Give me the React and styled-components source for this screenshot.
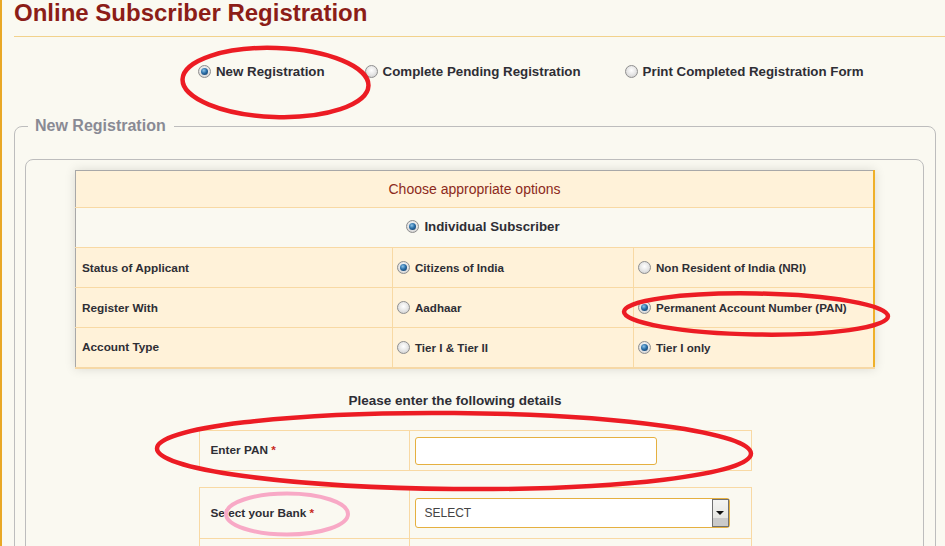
import React from 'react';
import styled, { createGlobalStyle } from 'styled-components';

const GlobalStyle = createGlobalStyle`
  html, body {
    margin: 0;
    padding: 0;
    background: #faf9f1;
  }
  body {
    font-family: "Liberation Sans", Arial, sans-serif;
    color: #2b2b2b;
  }
`;

const Page = styled.div`
  position: relative;
  min-height: 546px;
  overflow: hidden;
  border-left: 2px solid #e9a826;
  background: #faf9f1;
  padding-left: 12px;
`;

const Title = styled.h1`
  margin: 0;
  padding-top: 2px;
  height: 34px;
  line-height: 22px;
  font-size: 24px;
  font-weight: bold;
  color: #8c1d18;
  border-bottom: 1px solid #f2d28c;
`;

const TopOptions = styled.div`
  display: flex;
  align-items: center;
  height: 71px;
  padding-left: 184px;
  gap: 40px;
  margin-top: -1px;
`;

const RadioLabel = styled.label`
  display: ${(p) => (p.block ? 'flex' : 'inline-flex')};
  align-items: center;
  gap: 5px;
  margin-right: ${(p) => p.mr || 0}px;
  font-size: ${(p) => p.size || 13.3}px;
  font-weight: bold;
  color: #2e2e35;
  white-space: nowrap;
`;

const RadioDot = styled.span`
  display: inline-block;
  box-sizing: border-box;
  width: 13px;
  height: 13px;
  border-radius: 50%;
  border: 1px solid #8f8f8f;
  background: radial-gradient(circle at 50% 40%, #ffffff 0%, #e4e4e4 55%, #c4c4c4 100%);
  position: relative;
  flex: none;
  &::after {
    content: '';
    display: ${(p) => (p.checked ? 'block' : 'none')};
    position: absolute;
    left: 2px;
    top: 2px;
    width: 7px;
    height: 7px;
    border-radius: 50%;
    background: radial-gradient(circle at 40% 35%, #8fc4e8 0%, #2a6fa8 45%, #0d2c52 100%);
  }
`;

const Radio = ({ checked, children, size, block, mr }) => (
  <RadioLabel size={size} block={block} mr={mr}>
    <RadioDot checked={checked} />
    {children}
  </RadioLabel>
);

const Fieldset = styled.fieldset`
  margin: 10px 9px 0 0;
  padding: 24px 11px 20px 10px;
  border: 1px solid #bdbdbd;
  border-radius: 8px;
  min-height: 400px;
`;

const Legend = styled.legend`
  margin-left: 3px;
  padding: 0 8px 0 7px;
  font-size: 16px;
  font-weight: bold;
  color: #898a94;
`;

const InnerBox = styled.div`
  border: 1px solid #bdbdbd;
  border-radius: 8px;
  padding: 10px 48px 40px 49px;
  min-height: 380px;
`;

const OptionsTable = styled.table`
  width: 800px;
  table-layout: fixed;
  border-collapse: collapse;
  border-left: 1px solid #a8a8a8;
  border-top: 1px solid #a8a8a8;
  border-right: 2px solid #efb02a;
  border-bottom: 2px solid #f6d8a6;
  box-shadow: 0 0 10px rgba(0, 0, 0, 0.13);
  background: #fff2d9;
`;

const Row = styled.tr`
  height: 40px;
  background: ${(p) => (p.plain ? '#faf9f1' : '#fff2d9')};
`;

const HeadCell = styled.td`
  height: 36px;
  padding: 0;
  text-align: center;
  font-size: 14px;
  color: #8c2a1c;
  border-bottom: 1px solid #f8d9a4;
`;

const Cell = styled.td`
  padding: 0 4px 0 ${(p) => p.pad || 6}px;
  vertical-align: middle;
  font-size: 11.8px;
  font-weight: bold;
  color: #2e2e35;
  border-bottom: 1px solid #f8d9a4;
  border-left: ${(p) => (p.first ? 'none' : '1px solid #f8d9a4')};
`;

const CenterCell = styled.td`
  text-align: center;
  padding-left: 18px;
  border-bottom: 1px solid #f8d9a4;
`;

const Subheading = styled.div`
  margin-top: 24px;
  padding-right: 40px;
  text-align: center;
  font-size: 13.5px;
  font-weight: bold;
  color: #2e2e35;
`;

const FormTable = styled.table`
  width: 553px;
  table-layout: fixed;
  margin: ${(p) => p.top}px auto 0;
  border-collapse: collapse;
  border: 1px solid #f8d9a4;
`;

const FormRow = styled.tr`
  height: ${(p) => p.h}px;
`;

const FormLabel = styled.td`
  width: 197px;
  padding-left: 11px;
  font-size: 11.8px;
  font-weight: bold;
  color: #2e2e35;
  border-right: 1px solid #f8d9a4;
  border-bottom: 1px solid #f8d9a4;
`;

const FormField = styled.td`
  padding-left: 5px;
  border-bottom: 1px solid #f8d9a4;
`;

const Star = styled.span`
  color: #c8281c;
`;

const TextInput = styled.input`
  box-sizing: border-box;
  width: 242px;
  height: 28px;
  margin-top: 1px;
  border: 1px solid #e5b040;
  border-radius: 3px;
  background: #fff;
  outline: none;
  display: block;
`;

const SelectBox = styled.div`
  box-sizing: border-box;
  width: 315px;
  height: 30px;
  border: 1px solid #e5b040;
  border-radius: 3px;
  background: #fff;
  display: flex;
  align-items: center;
  justify-content: space-between;
  padding-left: 9px;
  font-size: 12px;
  color: #444;
`;

const DropButton = styled.span`
  box-sizing: border-box;
  width: 17px;
  height: 28px;
  border: 1px solid #707070;
  background: linear-gradient(#f4f4f2 0%, #e6e6e2 70%, #cacaca 71%, #cacaca 100%);
  display: flex;
  justify-content: center;
  padding-top: 11px;
  &::after {
    content: '';
    width: 0;
    height: 0;
    border-left: 4px solid transparent;
    border-right: 4px solid transparent;
    border-top: 4px solid #111;
  }
`;

const Marks = styled.svg`
  position: absolute;
  left: 0;
  top: 0;
  width: 945px;
  height: 546px;
  pointer-events: none;
`;

export default function App() {
  return (
    <>
      <GlobalStyle />
      <Page>
        <Title>Online Subscriber Registration</Title>
        <TopOptions>
          <Radio checked>New Registration</Radio>
          <Radio mr={4}>Complete Pending Registration</Radio>
          <Radio>Print Completed Registration Form</Radio>
        </TopOptions>

        <Fieldset>
          <Legend>New Registration</Legend>
          <InnerBox>
            <OptionsTable>
              <colgroup>
                <col style={{ width: 317 }} />
                <col style={{ width: 241 }} />
                <col />
              </colgroup>
              <tbody>
                <tr>
                  <HeadCell colSpan={3}>Choose appropriate options</HeadCell>
                </tr>
                <Row plain>
                  <CenterCell colSpan={3}>
                    <Radio checked>Individual Subscriber</Radio>
                  </CenterCell>
                </Row>
                <Row>
                  <Cell first>Status of Applicant</Cell>
                  <Cell pad={4}>
                    <Radio checked block size={11.6}>Citizens of India</Radio>
                  </Cell>
                  <Cell pad={4}>
                    <Radio block size={11.6}>Non Resident of India (NRI)</Radio>
                  </Cell>
                </Row>
                <Row>
                  <Cell first>Register With</Cell>
                  <Cell pad={4}>
                    <Radio block size={11.6}>Aadhaar</Radio>
                  </Cell>
                  <Cell pad={4}>
                    <Radio checked block size={11.6}>Permanent Account Number (PAN)</Radio>
                  </Cell>
                </Row>
                <Row>
                  <Cell first>Account Type</Cell>
                  <Cell pad={4}>
                    <Radio block size={11.6}>Tier I &amp; Tier II</Radio>
                  </Cell>
                  <Cell pad={4}>
                    <Radio checked block size={11.6}>Tier I only</Radio>
                  </Cell>
                </Row>
              </tbody>
            </OptionsTable>

            <Subheading>Please enter the following details</Subheading>

            <FormTable top={22}>
              <tbody>
                <FormRow h={40}>
                  <FormLabel>
                    Enter PAN <Star>*</Star>
                  </FormLabel>
                  <FormField>
                    <TextInput type="text" />
                  </FormField>
                </FormRow>
              </tbody>
            </FormTable>

            <FormTable top={16}>
              <tbody>
                <FormRow h={51}>
                  <FormLabel>
                    Select your Bank <Star>*</Star>
                  </FormLabel>
                  <FormField>
                    <SelectBox>
                      SELECT
                      <DropButton />
                    </SelectBox>
                  </FormField>
                </FormRow>
                <FormRow h={40}>
                  <FormLabel />
                  <FormField />
                </FormRow>
              </tbody>
            </FormTable>
          </InnerBox>
        </Fieldset>

        <Marks viewBox="0 0 945 546">
          <g fill="none" strokeWidth="4.5">
            <ellipse cx="273.5" cy="82.5" rx="93" ry="34.5" stroke="#ec1c24" transform="rotate(2 273.5 82.5)" />
            <ellipse cx="754" cy="314" rx="132" ry="20.5" stroke="#ec1c24" transform="rotate(1 754 314)" />
            <ellipse cx="452" cy="451" rx="297" ry="38" stroke="#ec1c24" transform="rotate(0.5 452 451)" />
            <ellipse cx="285" cy="514" rx="61" ry="20.5" stroke="#f8a9c6" strokeWidth="4" />
          </g>
        </Marks>
      </Page>
    </>
  );
}
